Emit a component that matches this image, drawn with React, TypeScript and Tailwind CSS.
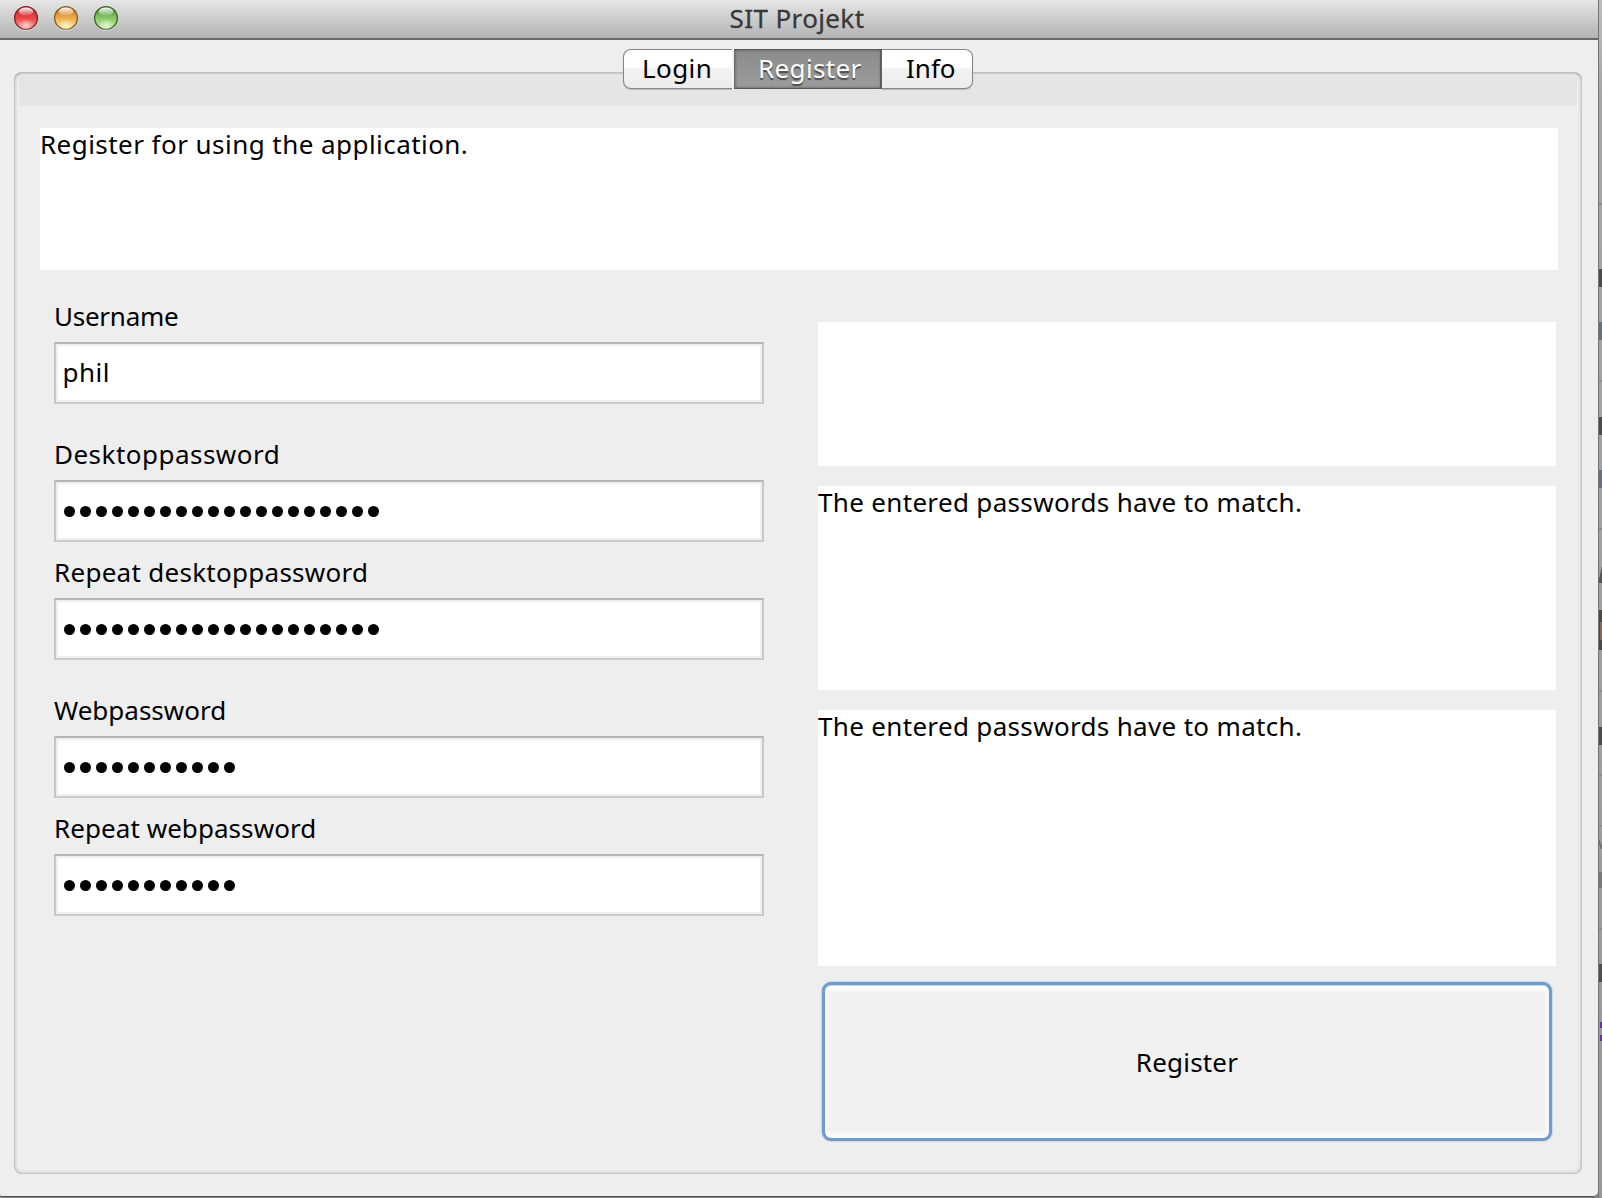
import React from "react";

const label = "whitespace-pre leading-[36px]";

function Light({ id, rim, top, mid, low }: { id: string; rim: string; top: string; mid: string; low: string }) {
  return (
    <svg width="26" height="26" viewBox="0 0 26 26">
      <defs>
        <linearGradient id={id} x1="0" y1="0" x2="0" y2="1">
          <stop offset="0" stopColor={top} />
          <stop offset="0.5" stopColor={mid} />
          <stop offset="1" stopColor={low} />
        </linearGradient>
        <linearGradient id={id + "s"} x1="0" y1="0" x2="0" y2="1">
          <stop offset="0" stopColor="#fff" stopOpacity="0.95" />
          <stop offset="1" stopColor="#fff" stopOpacity="0.1" />
        </linearGradient>
        <radialGradient id={id + "g"} cx="0.5" cy="0.5" r="0.5">
          <stop offset="0" stopColor="#fff" stopOpacity="0.6" />
          <stop offset="1" stopColor="#fff" stopOpacity="0" />
        </radialGradient>
      </defs>
      <circle cx="13" cy="14" r="12" fill="#fff" opacity="0.45" />
      <circle cx="13" cy="13" r="11.4" fill={`url(#${id})`} stroke={rim} strokeWidth="1.4" />
      <ellipse cx="13" cy="20" rx="8" ry="6" fill={`url(#${id}g)`} />
      <ellipse cx="13" cy="6.6" rx="7.2" ry="4" fill={`url(#${id}s)`} />
    </svg>
  );
}

function Field({ text, dots = 0 }: { text?: string; dots?: number }) {
  return (
    <div className="flex h-[62px] w-[710px] items-center border-2 border-[#c6c6c6] border-t-[#b5b5b5] border-b-[#cbcbcb] bg-white pl-[8px] shadow-[inset_0_0_0_2px_#efefef,inset_0_2px_1px_#dedede]">
      {text && <span className="-ml-[1.5px] -mt-[2px] tracking-[0.5px] leading-[36px]">{text}</span>}
      {dots > 0 && (
        <div className="flex gap-[5px] pt-[1px]">
          {Array.from({ length: dots }, (_, i) => (
            <span key={i} className="size-[11px] rounded-full bg-black" />
          ))}
        </div>
      )}
    </div>
  );
}

const slivers: [number, number, string][] = [
  [269, 18, "#4b4c4d"],
  [322, 18, "#66737e"],
  [417, 18, "#4b4c4d"],
  [470, 18, "#66737e"],
  [610, 40, "#4d4947"],
  [727, 18, "#4b4c4d"],
  [872, 16, "#737a82"],
  [964, 18, "#4e4f50"],
];

function Backdrop() {
  return (
    <svg width="4" height="1198" viewBox="0 0 4 1198">
      <defs>
        <linearGradient id="edge" x1="0" y1="0" x2="0" y2="1">
          <stop offset="0" stopColor="#bdbdbd" />
          <stop offset="0.08" stopColor="#a6a6a6" />
          <stop offset="1" stopColor="#999" />
        </linearGradient>
      </defs>
      <rect width="4" height="1198" fill="url(#edge)" />
      {[203, 380, 528, 690, 774, 825, 928].map((y) => (
        <rect key={y} y={y} width="4" height="2" fill="#8d8d8d" />
      ))}
      {slivers.map(([y, h, c]) => (
        <rect key={y} y={y} width="4" height={h} fill={c} />
      ))}
      <path d="M0 583 4 566V583Z" fill="#5b5350" />
      <path d="M0 839 4 849" stroke="#6b7076" strokeWidth="2" />
      <rect x="2" y="622" width="2" height="18" fill="#84695c" />
      <rect x="2" y="1022" width="2" height="6" fill="#64349a" />
      <rect x="2" y="1035" width="2" height="6" fill="#64349a" />
      <rect width="1" height="1198" fill="#747474" />
    </svg>
  );
}

export default function App() {
  return (
    <div className="flex h-[1198px] w-[1602px] overflow-hidden bg-[#858585] font-['Noto_Sans',sans-serif] text-[26px] text-black">
      <div className="flex h-[1197px] w-[1598px] flex-col rounded-bl-[2px] rounded-br-[5px] border-b border-[#505050] bg-[#eeeeee]">
        <header className="relative flex h-[40px] shrink-0 items-center justify-center border-b-2 border-[#686868] bg-linear-to-b from-[#e6e6e6] to-[#b3b3b3]">
          <div className="absolute left-[13px] top-[5px] flex gap-[14px]">
            <Light id="r" rim="#84272a" top="#a82a2e" mid="#ef4444" low="#f9a3a0" />
            <Light id="y" rim="#87602c" top="#b9701f" mid="#eeaa4c" low="#fbf095" />
            <Light id="g" rim="#3e6a2d" top="#4b8434" mid="#86c767" low="#d0f0a6" />
          </div>
          <span className="pb-[2px] pr-[4px] leading-[36px] tracking-[0.38px] text-[#383838] [-webkit-text-stroke:0.3px_#383838]">SIT Projekt</span>
        </header>
        <main className="flex flex-col pl-[14px] pt-[32px]">
          <section className="relative h-[1102px] w-[1568px] rounded-[8px] bg-[#eeeeee] shadow-[inset_0_2px_1px_#bcbcbc,inset_0_0_0_1px_#c6c6c6,inset_0_0_3px_2px_#cfcfcf]">
            <nav className="absolute left-[609px] top-[-23px] z-10 flex h-[40px] w-[351px]">
              <div className="flex w-[109px] shrink-0 items-center rounded-l-[8px] border-[1.5px] border-r-0 border-[#858585] bg-linear-to-b from-white from-45% via-[#f2f2f2] via-50% to-[#ececec] pl-[18px] shadow-[0_1px_1px_#bbb]"><span className="-mt-[2px] leading-[36px] tracking-[0.4px]">Login</span></div>
              <div className="w-[2px] shrink-0 bg-[#f4f4f4]" />
              <div className="flex w-[148px] shrink-0 items-center bg-linear-to-b from-[#8b8b8b] to-[#9c9c9c] pl-[24px] shadow-[inset_0_0_3px_1px_#555,inset_-1px_0_0_1px_#606060]"><span className="-mt-[2px] leading-[36px] tracking-[0.35px] text-white [text-shadow:0_2px_1px_#4a4a4a]">Register</span></div>
              <div className="flex w-[91px] shrink-0 items-center rounded-r-[8px] border-[1.5px] border-l-0 border-[#858585] bg-linear-to-b from-white from-45% via-[#f2f2f2] via-50% to-[#ececec] pl-[24px] shadow-[0_1px_1px_#bbb]"><span className="-mt-[2px] leading-[36px]">Info</span></div>
            </nav>
            <div className="mx-[5px] h-[34px] rounded-t-[5px] bg-linear-to-b from-transparent to-[#e5e5e5] to-[5px]" />
            <div className="ml-[26px] mt-[22px] h-[142px] w-[1518px] bg-white">
              <div className={label + " -translate-y-[2px] tracking-[0.45px]"}>Register for using the application.</div>
            </div>
            <div className="ml-[40px] flex">
              <div className="flex w-[764px] flex-col pt-[28px]">
                <div className={label + " mb-[8px] tracking-[-0.25px]"}>Username</div>
                <Field text="phil" />
                <div className={label + " mb-[8px] mt-[32px] tracking-[0.48px]"}>Desktoppassword</div>
                <Field dots={20} />
                <div className={label + " mb-[8px] mt-[12px] tracking-[0.28px]"}>Repeat desktoppassword</div>
                <Field dots={20} />
                <div className={label + " mb-[8px] mt-[32px]"}>Webpassword</div>
                <Field dots={11} />
                <div className={label + " mb-[8px] mt-[12px] tracking-[0.06px]"}>Repeat webpassword</div>
                <Field dots={11} />
              </div>
              <div className="flex w-[738px] flex-col gap-[20px] pt-[52px]">
                <div className="h-[144px] bg-white" />
                <div className="h-[204px] bg-white"><div className={label + " -translate-y-[2px] tracking-[0.33px]"}>The entered passwords have to match.</div></div>
                <div className="h-[256px] bg-white"><div className={label + " -translate-y-[2px] tracking-[0.33px]"}>The entered passwords have to match.</div></div>
                <button className="ml-[4px] mt-[-4px] h-[159px] w-[730px] rounded-[9px] border-[3px] border-[#6f9ccb] bg-[#f1f1f1] pt-[2px] tracking-[0.2px] shadow-[0_0_2px_#8aa5c0,inset_0_1px_1px_#b5d6f5,inset_0_5px_4px_#fff,inset_0_-4px_5px_#fff]">Register</button>
              </div>
            </div>
          </section>
        </main>
      </div>
      <Backdrop />
    </div>
  );
}
